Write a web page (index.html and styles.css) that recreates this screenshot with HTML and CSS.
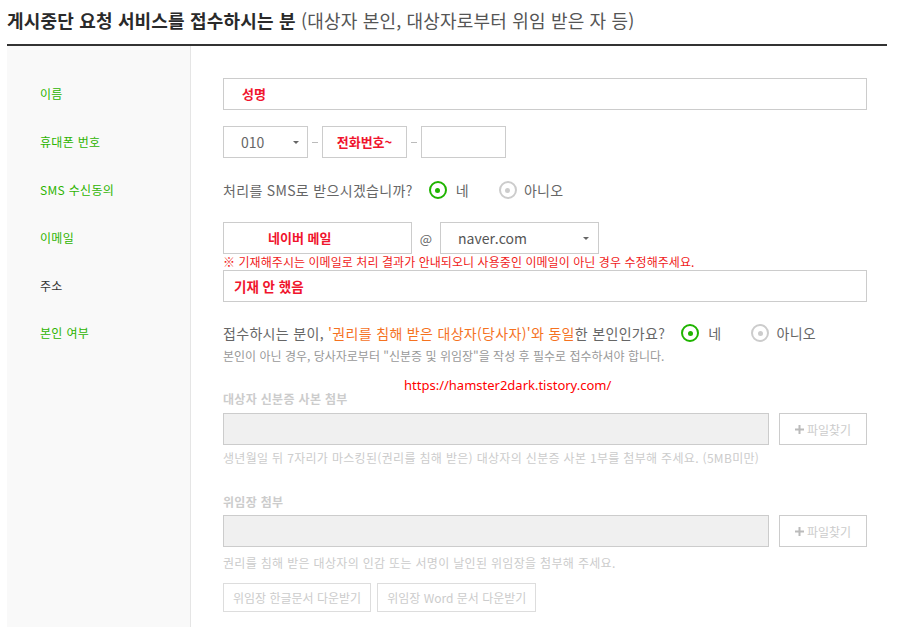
FILE: index.html
```html
<!DOCTYPE html>
<html lang="ko">
<head>
    <meta charset="UTF-8">
    <meta name="viewport" content="width=device-width, initial-scale=1.0">
    <title>게시중단 요청</title>
    <link rel="stylesheet" href="styles.css">
</head>
<body>

<div class="page">
    <h2 class="title">게시중단 요청 서비스를 접수하시는 분 <span class="title-sub">(대상자 본인, 대상자로부터 위임 받은 자 등)</span></h2>

    <div class="form">
        <div class="row">
            <div class="row-label">이름</div>
            <div class="row-body">
                <div class="field field-name">성명</div>
            </div>
        </div>

        <div class="row">
            <div class="row-label">휴대폰 번호</div>
            <div class="row-body line">
                <div class="select select-phone"><span>010</span><span class="arrow"></span></div>
                <span class="dash"></span>
                <div class="field field-phone">전화번호~</div>
                <span class="dash"></span>
                <div class="field field-phone"></div>
            </div>
        </div>

        <div class="row">
            <div class="row-label">SMS 수신동의</div>
            <div class="row-body line">
                <span class="question">처리를 SMS로 받으시겠습니까?</span>
                <label class="choice"><span class="radio checked"></span>네</label>
                <label class="choice"><span class="radio"></span>아니오</label>
            </div>
        </div>

        <div class="row row-tight">
            <div class="row-label">이메일</div>
            <div class="row-body">
                <div class="line">
                    <div class="field field-email">네이버 메일</div>
                    <span class="at">@</span>
                    <div class="select select-domain"><span>naver.com</span><span class="arrow"></span></div>
                </div>
                <p class="notice">※ 기재해주시는 이메일로 처리 결과가 안내되오니 사용중인 이메일이 아닌 경우 수정해주세요.</p>
            </div>
        </div>

        <div class="row row-address">
            <div class="row-label label-dark">주소</div>
            <div class="row-body">
                <div class="field field-address">기재 안 했음</div>
            </div>
        </div>

        <div class="row">
            <div class="row-label">본인 여부</div>
            <div class="row-body">
                <div class="line">
                    <span class="question">접수하시는 분이, <em class="accent">'권리를 침해 받은 대상자(당사자)'와 동일</em>한 본인인가요?</span>
                    <label class="choice"><span class="radio checked"></span>네</label>
                    <label class="choice"><span class="radio"></span>아니오</label>
                </div>
                <p class="hint">본인이 아닌 경우, 당사자로부터 "신분증 및 위임장"을 작성 후 필수로 접수하셔야 합니다.</p>

                <div class="attach attach-id">
                    <h4 class="attach-title">대상자 신분증 사본 첨부</h4>
                    <div class="file">
                        <div class="file-box"></div>
                        <button class="file-btn"><svg width="9" height="9" viewBox="0 0 9 9"><path d="M4.5 0v9M0 4.5h9" stroke="#bbb" stroke-width="2"/></svg>파일찾기</button>
                    </div>
                    <p class="attach-help">생년월일 뒤 7자리가 마스킹된(권리를 침해 받은) 대상자의 신분증 사본 1부를 첨부해 주세요. (5MB미만)</p>
                </div>

                <div class="attach attach-proxy">
                    <h4 class="attach-title">위임장 첨부</h4>
                    <div class="file">
                        <div class="file-box"></div>
                        <button class="file-btn"><svg width="9" height="9" viewBox="0 0 9 9"><path d="M4.5 0v9M0 4.5h9" stroke="#bbb" stroke-width="2"/></svg>파일찾기</button>
                    </div>
                    <p class="attach-help">권리를 침해 받은 대상자의 인감 또는 서명이 날인된 위임장을 첨부해 주세요.</p>
                    <div class="downloads">
                        <button class="down-btn">위임장 한글문서 다운받기</button>
                        <button class="down-btn">위임장 Word 문서 다운받기</button>
                    </div>
                </div>
            </div>
        </div>
    </div>

    <span class="watermark">https://hamster2dark.tistory.com/</span>
</div>

</body>
</html>
```

FILE: styles.css
```css
body {
    margin: 0;
    font-family: "Noto Sans CJK KR", "Noto Sans", sans-serif;
    letter-spacing: 0.02em;
    color: #666;
    background: #fff;
}
.page {
    position: relative;
    width: 880px;
    margin-left: 7px;
}
.title {
    margin: 0;
    padding: 8px 0 12px;
    font-size: 18px;
    line-height: 24px;
    font-weight: bold;
    color: #2a2a2a;
    letter-spacing: 0.01em;
    border-bottom: 2px solid #333;
}
.title-sub {
    font-weight: normal;
    color: #555;
    letter-spacing: 0.01em;
}
.form {
    padding-top: 32px;
    padding-bottom: 40px;
    background: linear-gradient(to right, #f9f9f9 183px, #e5e5e5 183px, #e5e5e5 184px, #fff 184px);
}
.row {
    display: flex;
    padding-bottom: 16px;
}
.row-tight {
    padding-bottom: 0;
}
.row-address {
    padding-bottom: 15px;
}
.row-label {
    width: 151px;
    flex: none;
    padding-left: 33px;
    font-size: 12px;
    line-height: 32px;
    color: #2db400;
}
.label-dark {
    color: #333;
}
.row-body {
    flex: 1;
    min-width: 0;
    padding: 0 20px 0 32px;
}
.line {
    display: flex;
    align-items: center;
    height: 32px;
}
.field {
    box-sizing: border-box;
    height: 32px;
    border: 1px solid #ccc;
    background: #fff;
    font-size: 13px;
    line-height: 30px;
    font-weight: bold;
    letter-spacing: 0;
    color: #f0142d;
}
.field-name {
    padding-left: 18px;
}
.field-phone {
    width: 85px;
    text-align: center;
}
.field-email {
    width: 189px;
    padding-left: 44px;
}
.field-address {
    padding-left: 10px;
    font-size: 13.5px;
}
.select {
    box-sizing: border-box;
    height: 32px;
    display: flex;
    align-items: center;
    justify-content: space-between;
    border: 1px solid #ccc;
    background: #fff;
    padding: 0 8px 0 17px;
    font-size: 14px;
    color: #666;
    letter-spacing: 0;
}
.select-phone {
    width: 85px;
}
.select-domain {
    width: 159px;
    padding-right: 9px;
    color: #555;
}
.arrow {
    width: 0;
    height: 0;
    border-left: 3px solid transparent;
    border-right: 3px solid transparent;
    border-top: 3px solid #666;
}
.dash {
    width: 14px;
    display: flex;
    justify-content: center;
}
.dash::before {
    content: "";
    width: 6px;
    height: 1px;
    background: #bbb;
}
.at {
    width: 28px;
    text-align: center;
    font-size: 13px;
    color: #666;
}
.question {
    font-size: 14px;
    color: #666;
}
.accent {
    font-style: normal;
    color: #f5721f;
}
.choice {
    display: inline-flex;
    align-items: center;
    gap: 9px;
    margin-left: 16px;
    font-size: 14px;
    color: #666;
}
.choice + .choice {
    margin-left: 30px;
    gap: 7px;
}
.radio {
    box-sizing: border-box;
    width: 18px;
    height: 18px;
    border: 2px solid #ccc;
    border-radius: 50%;
    display: inline-flex;
    align-items: center;
    justify-content: center;
}
.radio::after {
    content: "";
    width: 5px;
    height: 5px;
    border-radius: 50%;
    background: #ccc;
}
.radio.checked {
    border-color: #1fb400;
}
.radio.checked::after {
    background: #1fb400;
}
.notice {
    margin: 0;
    font-size: 12px;
    line-height: 16px;
    letter-spacing: 0.005em;
    color: #f01a1a;
}
.hint {
    margin: 0;
    font-size: 12px;
    line-height: 14px;
    letter-spacing: 0;
    color: #999;
}
.attach-title {
    margin: 29px 0 0;
    font-size: 12px;
    line-height: 14px;
    font-weight: bold;
    color: #ccc;
}
.attach-proxy .attach-title {
    margin-top: 30px;
}
.file {
    display: flex;
    gap: 10px;
    margin-top: 7px;
}
.attach-proxy .file {
    margin-top: 6px;
}
.file-box {
    flex: 1;
    height: 32px;
    box-sizing: border-box;
    border: 1px solid #ccc;
    background: #f0f0f0;
}
.file-btn {
    width: 88px;
    height: 32px;
    box-sizing: border-box;
    display: flex;
    align-items: center;
    justify-content: center;
    gap: 3px;
    border: 1px solid #ccc;
    background: #fff;
    font: inherit;
    font-size: 12px;
    color: #ccc;
    padding: 0;
}
.attach-help {
    margin: 6px 0 0;
    font-size: 12px;
    line-height: 14px;
    color: #ccc;
}
.attach-proxy .attach-help {
    margin-top: 9px;
}
.downloads {
    display: flex;
    gap: 6px;
    margin-top: 13px;
}
.down-btn {
    height: 29px;
    box-sizing: border-box;
    padding: 0 9px;
    border: 1px solid #ddd;
    background: #fff;
    font: inherit;
    font-size: 12px;
    color: #ccc;
}
.watermark {
    position: absolute;
    left: 397px;
    top: 376px;
    font-family: "Noto Sans", sans-serif;
    font-size: 13px;
    line-height: 18px;
    letter-spacing: 0;
    color: #f00;
}
```
